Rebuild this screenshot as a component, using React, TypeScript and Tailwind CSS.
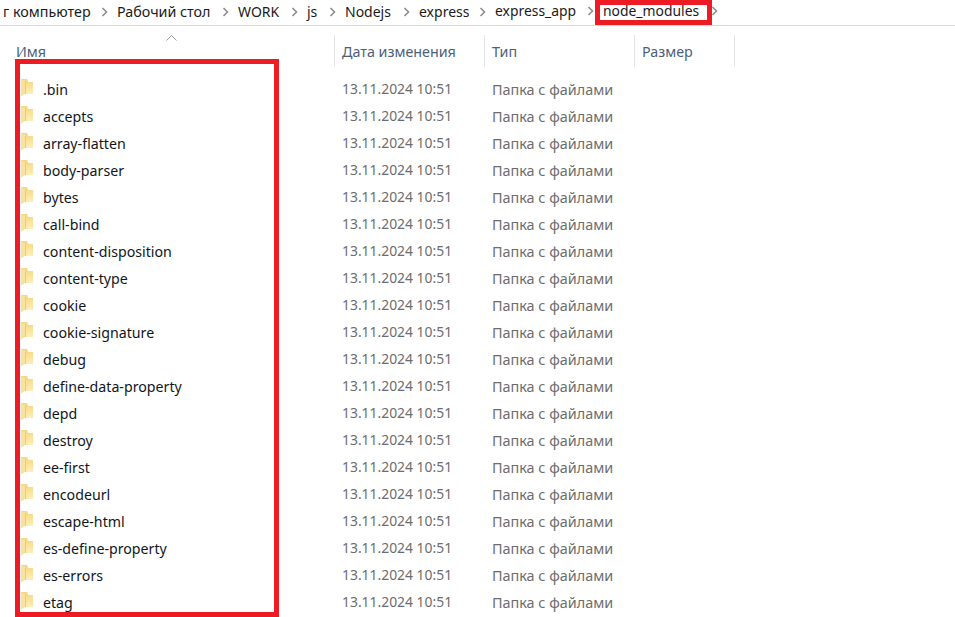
const names = [".bin","accepts","array-flatten","body-parser","bytes","call-bind","content-disposition","content-type","cookie","cookie-signature","debug","define-data-property","depd","destroy","ee-first","encodeurl","escape-html","es-define-property","es-errors","etag"];

const crumbs: [string, string][] = [
  ["г компьютер", "w-[114px] text-[14.3px]"],
  ["Рабочий стол", "w-[121px] text-[14.3px]"],
  ["WORK", "w-[69px] text-[14px]"],
  ["js", "w-[38px] text-[14px]"],
  ["Nodejs", "w-[74px] text-[14px]"],
  ["express", "w-[76px] text-[14px]"],
  ["express_app", "w-[108px] text-[13.9px]"],
  ["node_modules", "w-[124px] text-[13.9px]"],
];

function Chevron() {
  return (
    <svg width="7" height="10" viewBox="0 0 7 10" className="block shrink-0">
      <path d="M1.5 1 L5.5 5 L1.5 9" fill="none" stroke="#8a8a8a" strokeWidth="1.5" />
    </svg>
  );
}

function Folder() {
  return (
    <svg width="13" height="18" viewBox="0 0 13 18" className="block shrink-0 mb-[2px]">
      <defs>
        <linearGradient id="fg" x1="0" y1="0" x2="0" y2="1">
          <stop offset="0" stopColor="#f6d67e" />
          <stop offset="1" stopColor="#feeeb8" />
        </linearGradient>
      </defs>
      <path d="M0 0 L6 0 L7.5 3 L12 3 L12 15 L0 15 Z" fill="url(#fg)" />
      <path d="M0 0.5 L4 2 L4 15 L0 17.5 Z" fill="#fae29a" />
      <path d="M4 2 L5 2.5 L5 15 L4 15 Z" fill="#f0cc6c" />
    </svg>
  );
}

export default function App() {
  return (
    <div className="relative w-[955px] h-[617px] overflow-hidden bg-white font-['Noto_Sans',sans-serif] text-[14px]">
      <div className="flex items-center h-[26px] border-b border-[#d9d9d9] pl-[3px] pb-[2px] text-[#1a1a1a]">
        {crumbs.map(([c, w]) => (
          <div key={c} className={`flex items-center shrink-0 ${w}`}>
            <span className="whitespace-nowrap">{c}</span>
            <span className="ml-auto mr-[9px]"><Chevron /></span>
          </div>
        ))}
      </div>
      <div className="grid grid-cols-[334px_150px_150px_101px] h-[32px] mt-[9px] text-[#4c607a] text-[14.3px]">
        <div className="relative pl-[16px] pt-[6px]">
          Имя
          <svg width="11" height="6" viewBox="0 0 11 6" className="absolute left-[166px] top-0">
            <path d="M0.5 5.5 L5.5 0.5 L10.5 5.5" fill="none" stroke="#9a9a9a" />
          </svg>
        </div>
        {["Дата изменения", "Тип", "Размер"].map((h) => (
          <div key={h} className="border-l border-[#e5e5e5] pl-[7px] pt-[6px] last:border-r">{h}</div>
        ))}
      </div>
      <div className="mt-[9px]">
        {names.map((n) => (
          <div key={n} className="grid grid-cols-[342px_150px_1fr] h-[27px] items-center">
            <div className="flex items-center pl-[21px] gap-[9px] text-[#10161c] text-[14.2px]">
              <Folder />
              <span>{n}</span>
            </div>
            <div className="text-[#6d6d6d] text-[13.9px]">13.11.2024 10:51</div>
            <div className="text-[#6d6d6d] text-[14.4px]">Папка с файлами</div>
          </div>
        ))}
      </div>
      <div className="absolute left-[15px] top-[59px] w-[264px] h-[558px] border-[5px] border-[#ed1c24]" />
      <div className="absolute left-[595px] top-0 w-[117px] h-[25px] border-[5px] border-[#ed1c24]" />
    </div>
  );
}
